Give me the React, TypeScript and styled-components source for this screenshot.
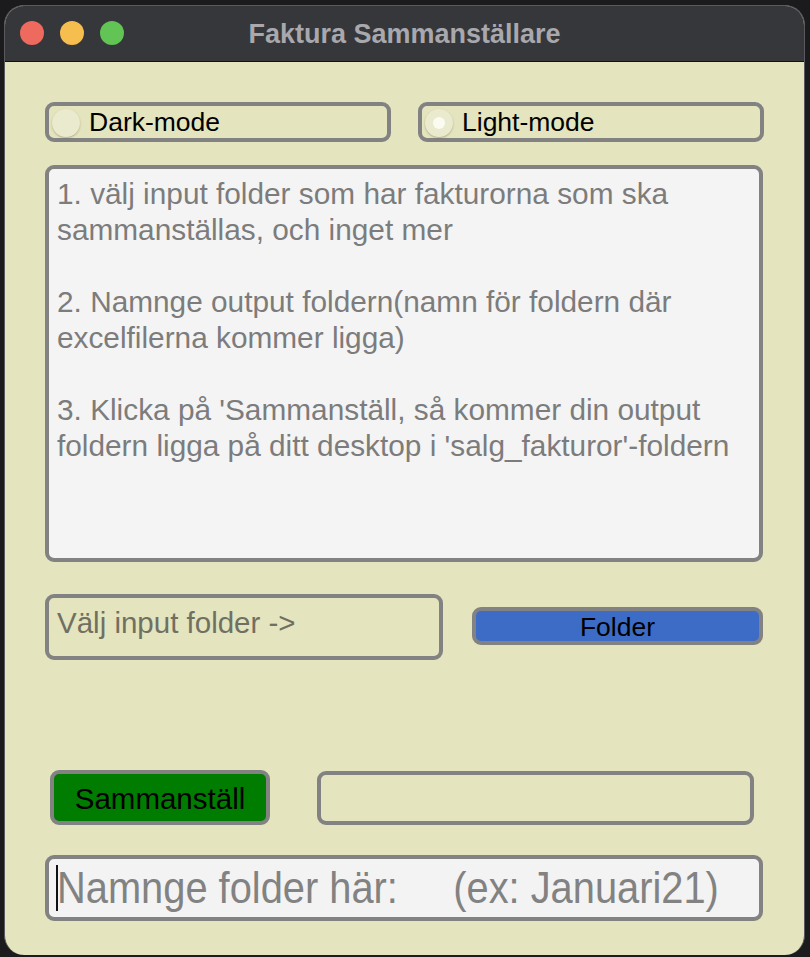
import styled, { createGlobalStyle } from "styled-components";

const GlobalStyle = createGlobalStyle`
  html, body {
    margin: 0;
    padding: 0;
    background: #1b1b1d;
  }
  * {
    box-sizing: border-box;
  }
`;

const Desktop = styled.div`
  width: 810px;
  height: 957px;
  padding: 5px 5px 2px 4px;
  background: #1b1b1d;
  font-family: "Liberation Sans", Arial, sans-serif;
`;

const Window = styled.div`
  display: flex;
  flex-direction: column;
  height: 100%;
  border-radius: 20px;
  overflow: hidden;
  border: 1px solid #5a5a5e;
  border-bottom: none;
  background: #e4e4bf;
`;

const TitleBar = styled.div`
  position: relative;
  height: 56px;
  flex-shrink: 0;
  display: flex;
  align-items: center;
  justify-content: center;
  background: #36373b;
  border-bottom: 1px solid #111;
`;

const Lights = styled.div`
  position: absolute;
  left: 15px;
  top: 15px;
  display: flex;
  gap: 16px;
`;

const Light = styled.span<{ $color: string }>`
  width: 24px;
  height: 24px;
  border-radius: 50%;
  background: ${(p) => p.$color};
`;

const Title = styled.div`
  color: #a8a8ad;
  font-weight: bold;
  font-size: 27px;
  margin-top: 1px;
`;

const Body = styled.main`
  flex: 1;
  display: flex;
  flex-direction: column;
  padding: 40px 41px 0 40px;
`;

const RadioRow = styled.div`
  display: grid;
  grid-template-columns: 346px 346px;
  gap: 27px;
`;

const RadioBox = styled.label`
  height: 40px;
  display: flex;
  align-items: center;
  gap: 9px;
  padding-left: 3px;
  padding-top: 1px;
  border: 4px solid #828282;
  border-radius: 9px;
  font-size: 26.5px;
  color: #000;
`;

const RadioDot = styled.span<{ $checked?: boolean }>`
  width: 28px;
  height: 28px;
  border-radius: 50%;
  background: #eaeacf;
  box-shadow: 0 1px 2px rgba(120, 110, 60, 0.45);
  display: flex;
  align-items: center;
  justify-content: center;
  &::after {
    content: "";
    display: ${(p) => (p.$checked ? "block" : "none")};
    width: 12px;
    height: 12px;
    border-radius: 50%;
    background: #fbfbf2;
  }
`;

const Instructions = styled.div`
  margin-top: 23px;
  height: 397px;
  padding: 7px 8px;
  background: #f4f4f4;
  border: 4px solid #828282;
  border-radius: 9px;
  color: #7c7c7c;
  font-size: 29.8px;
  line-height: 36px;
  white-space: pre-wrap;
`;

const InputRow = styled.div`
  margin-top: 32px;
  display: flex;
  align-items: flex-start;
  gap: 29px;
`;

const FolderField = styled.div`
  width: 398px;
  height: 66px;
  padding: 8px 8px;
  border: 4px solid #828282;
  border-radius: 9px;
  color: #707062;
  font-size: 29.5px;
`;

const Button = styled.button<{ $bg: string; $w: number; $h: number; $fs: number }>`
  width: ${(p) => p.$w}px;
  height: ${(p) => p.$h}px;
  background: ${(p) => p.$bg};
  border: 4px solid #828282;
  border-radius: 9px;
  color: #000;
  font-family: inherit;
  font-size: ${(p) => p.$fs}px;
  line-height: 1;
  padding: 2px 0 0;
`;

const FolderButton = styled(Button)`
  margin-top: 13px;
`;

const ActionRow = styled.div`
  margin-top: 110px;
  padding: 0 9px 0 5px;
  display: flex;
  align-items: center;
  gap: 47px;
`;

const StatusBox = styled.div`
  flex: 1;
  height: 54px;
  border: 4px solid #828282;
  border-radius: 9px;
`;

const NameInput = styled.div`
  position: relative;
  margin-top: 30px;
  height: 66px;
  padding: 0 8px;
  display: flex;
  align-items: center;
  overflow: hidden;
  background: #f3f3f3;
  border: 4px solid #828282;
  border-radius: 9px;
  &::before {
    content: "";
    position: absolute;
    left: 7px;
    top: 6px;
    width: 2px;
    height: 46px;
    background: #111;
  }
`;

const Placeholder = styled.span`
  display: inline-block;
  color: #828282;
  font-size: 45px;
  white-space: pre;
  transform: scaleX(0.885);
  transform-origin: left center;
`;

const text = `1. välj input folder som har fakturorna som ska
sammanställas, och inget mer

2. Namnge output foldern(namn för foldern där
excelfilerna kommer ligga)

3. Klicka på 'Sammanställ, så kommer din output
foldern ligga på ditt desktop i 'salg_fakturor'-foldern`;

export default function App() {
  return (
    <>
      <GlobalStyle />
      <Desktop>
        <Window>
          <TitleBar>
            <Lights>
              <Light $color="#ee6a5e" />
              <Light $color="#f5be4f" />
              <Light $color="#61c454" />
            </Lights>
            <Title>Faktura Sammanställare</Title>
          </TitleBar>
          <Body>
            <RadioRow>
              <RadioBox>
                <RadioDot />
                Dark-mode
              </RadioBox>
              <RadioBox>
                <RadioDot $checked />
                Light-mode
              </RadioBox>
            </RadioRow>
            <Instructions>{text}</Instructions>
            <InputRow>
              <FolderField>Välj input folder -&gt;</FolderField>
              <FolderButton $bg="#3c6cc6" $w={291} $h={38} $fs={26.5}>
                Folder
              </FolderButton>
            </InputRow>
            <ActionRow>
              <Button $bg="#007c00" $w={220} $h={55} $fs={29.5}>
                Sammanställ
              </Button>
              <StatusBox />
            </ActionRow>
            <NameInput>
              <Placeholder>Namnge folder här:     (ex: Januari21)</Placeholder>
            </NameInput>
          </Body>
        </Window>
      </Desktop>
    </>
  );
}
